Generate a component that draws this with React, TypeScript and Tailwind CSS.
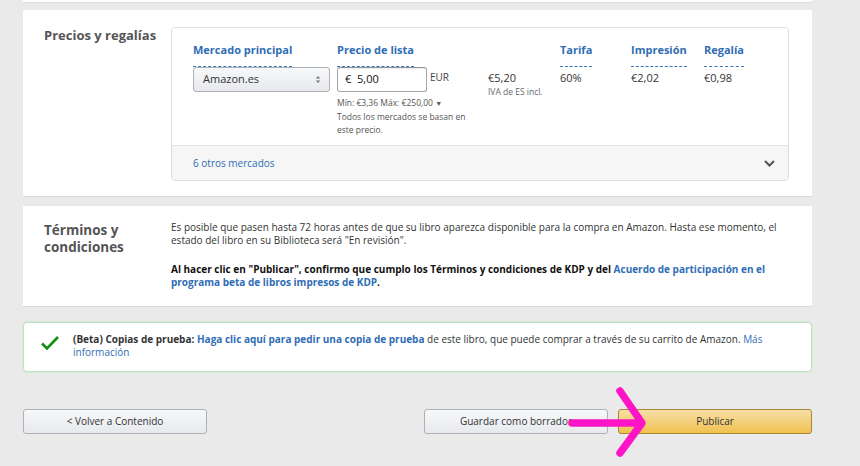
import React from "react";

const F = { fontFamily: '"Open Sans", "Noto Sans", sans-serif' };

function Hdr({ children }: { children: React.ReactNode }) {
  return (
    <div className="flex">
      <span className="border-b border-dashed border-[#3b73b9] pb-[1px] text-[11px] font-bold leading-[14px] text-[#2f6db5]">
        {children}
      </span>
    </div>
  );
}

const btn = "flex h-[25px] items-center justify-center rounded-[3px] border text-[10px] text-[#333]";

export default function App() {
  return (
    <div style={F} className="relative h-[466px] w-[860px] overflow-hidden bg-[#eaeaea] text-[#333]">
      <div className="ml-[23px] flex w-[789px] flex-col">
        {/* previous card remnant */}
        <div className="h-[3px] border-b border-[#dcdcdc] bg-white" />

        {/* Pricing card */}
        <div className="mt-[7px] flex h-[187px] border-b border-[#dadada] bg-white">
          <div className="w-[148px] pl-[21px] pt-[16px] text-[13px] font-bold leading-[18px] text-[#555]">
            Precios y regalías
          </div>
          <div className="mt-[17px] flex h-[154px] w-[618px] flex-col overflow-hidden rounded-[4px] border border-[#dddddd]">
            <div className="grid h-[117px] grid-cols-[144px_151px_72px_71px_73px_1fr] grid-rows-[24px_auto] bg-white pl-[21px] pt-[15px]">
              <Hdr>Mercado principal</Hdr>
              <Hdr>Precio de lista</Hdr>
              <div />
              <Hdr>Tarifa</Hdr>
              <Hdr>Impresión</Hdr>
              <Hdr>Regalía</Hdr>

              <div>
                <div className="flex h-[25px] w-[137px] items-center justify-between rounded-[3px] border border-[#adb1b8] bg-gradient-to-b from-[#f7f8fa] to-[#e7e9ec] pl-[9px] pr-[8px] text-[11px] text-[#333]">
                  <span>Amazon.es</span>
                  <svg width="6" height="9" viewBox="0 0 6 9"><path d="M3 1 L5.2 3.6 H0.8 Z M3 8 L5.2 5.4 H0.8 Z" fill="#777" /></svg>
                </div>
              </div>
              <div>
                <div className="flex items-start">
                  <div className="flex h-[25px] w-[90px] items-center rounded-[3px] border border-[#a6a6a6] border-t-[#949494] bg-white pl-[7px] text-[11px] text-[#111] shadow-[0_1px_0_rgba(0,0,0,0.07)_inset]">
                    €&nbsp;&nbsp;5,00
                  </div>
                  <span className="ml-[3px] mt-[3px] text-[10px] leading-[14px] text-[#444]">EUR</span>
                </div>
                <div className="mt-[4px] text-[8.5px] leading-[13px] text-[#555]">
                  <div>Mín: €3,36 Máx: €250,00 <span className="text-[7px]">▼</span></div>
                  <div>Todos los mercados se basan en</div>
                  <div>este precio.</div>
                </div>
              </div>
              <div className="pt-[3px]">
                <div className="text-[11px] leading-[15px]">€5,20</div>
                <div className="mt-[1px] text-[8.5px] leading-[12px] text-[#666]">IVA de ES incl.</div>
              </div>
              <div className="pt-[3px] text-[11px] leading-[15px]">60%</div>
              <div className="pt-[3px] text-[11px] leading-[15px]">€2,02</div>
              <div className="pt-[3px] text-[11px] leading-[15px]">€0,98</div>
            </div>
            <div className="flex flex-1 items-center justify-between border-t border-[#e3e3e3] bg-[#f6f6f6] pl-[21px] pr-[13px]">
              <span className="text-[10px] text-[#2f6db5]">6 otros mercados</span>
              <svg width="11" height="7" viewBox="0 0 11 7"><path d="M1 1 L5.5 5.5 L10 1" stroke="#555" strokeWidth="2" fill="none" /></svg>
            </div>
          </div>
        </div>

        {/* Terms card */}
        <div className="mt-[9px] flex h-[101px] border-b border-[#dadada] bg-white">
          <div className="w-[148px] pl-[21px] pt-[16px] text-[13.5px] font-bold leading-[17px] text-[#555]">
            Términos y<br />condiciones
          </div>
          <div className="w-[625px] pt-[15px] text-[10px] leading-[13px] text-[#333]">
            <p>Es posible que pasen hasta 72 horas antes de que su libro aparezca disponible para la compra en Amazon. Hasta ese momento, el estado del libro en su Biblioteca será "En revisión".</p>
            <p className="mt-[16px] font-bold text-[#111]">
              Al hacer clic en "Publicar", confirmo que cumplo los Términos y condiciones de KDP y del{" "}
              <span className="text-[#2f6db5]">Acuerdo de participación en el programa beta de libros impresos de KDP</span>.
            </p>
          </div>
        </div>

        {/* Alert */}
        <div className="mt-[15px] flex h-[50px] rounded-[4px] border border-[#bfe2bf] bg-white shadow-[0_0_0_1px_rgba(200,230,200,0.5)]">
          <div className="pl-[16px] pt-[12px]">
            <svg width="20" height="16" viewBox="0 0 20 16"><path d="M2 8.5 L7 13.5 L18 2" stroke="#148b14" strokeWidth="2.6" fill="none" /></svg>
          </div>
          <div className="w-[705px] pl-[13px] pt-[10px] text-[10px] leading-[13px] text-[#333]">
            <span className="font-bold">(Beta) Copias de prueba: </span>
            <span className="font-bold text-[#2f6db5]">Haga clic aquí para pedir una copia de prueba</span> de este libro, que puede comprar a través de su carrito de Amazon. <span className="text-[#2f6db5]">Más información</span>
          </div>
        </div>

        {/* Buttons */}
        <div className="mt-[37px] flex items-center">
          <div className={`${btn} w-[184px] border-[#adb1b8] bg-gradient-to-b from-[#f7f8fa] to-[#e7e9ec]`}>
            &lt; Volver a Contenido
          </div>
          <div className={`${btn} ml-auto w-[184px] border-[#adb1b8] bg-gradient-to-b from-[#f7f8fa] to-[#e7e9ec]`}>
            Guardar como borrador
          </div>
          <div className={`${btn} ml-[10px] w-[194px] border-[#a88734] bg-gradient-to-b from-[#f7dfa5] to-[#f0c14b]`}>
            Publicar
          </div>
        </div>
      </div>

      {/* Pink arrow annotation */}
      <svg className="absolute left-[560px] top-[380px]" width="100" height="86" viewBox="0 0 100 86">
        <path d="M12 43 H80 M60 11 L82 43 L60 73" stroke="#ff14c8" strokeWidth="7.5" strokeLinecap="round" strokeLinejoin="round" fill="none" />
      </svg>
    </div>
  );
}
